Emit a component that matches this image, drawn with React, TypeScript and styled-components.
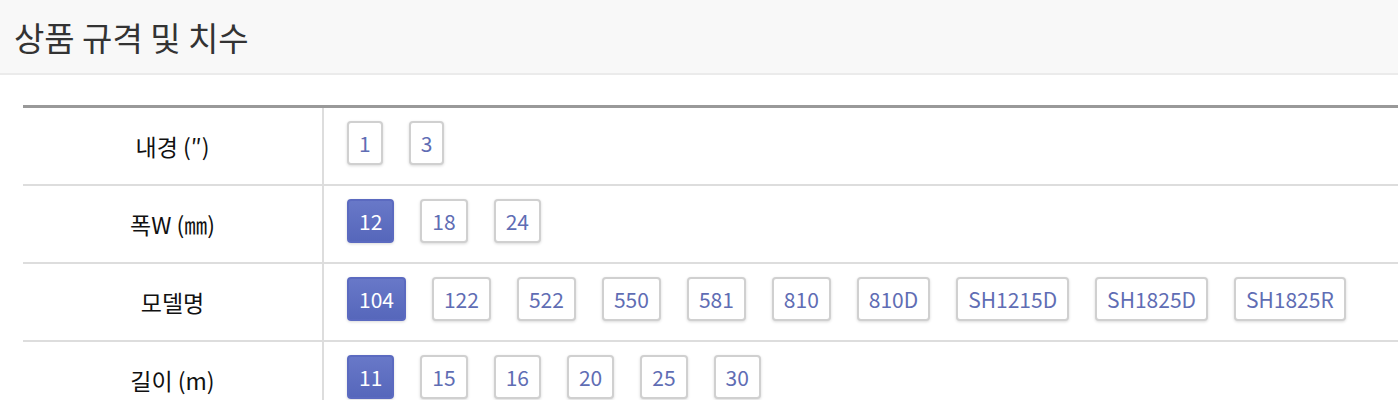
import { FC } from "react";
import styled, { createGlobalStyle } from "styled-components";

const GlobalStyle = createGlobalStyle`
    html, body {
        margin: 0;
        padding: 0;
        background: #fff;
        font-family: "Noto Sans CJK KR", "Noto Sans", sans-serif;
        color: #111;
    }
`;

interface ISpecRow {
    label: string;
    options: string[];
    selected?: string;
}

const specRows: ISpecRow[] = [
    { label: "내경 (″)", options: ["1", "3"] },
    { label: "폭W (㎜)", options: ["12", "18", "24"], selected: "12" },
    {
        label: "모델명",
        options: ["104", "122", "522", "550", "581", "810", "810D", "SH1215D", "SH1825D", "SH1825R"],
        selected: "104",
    },
    { label: "길이 (m)", options: ["11", "15", "16", "20", "25", "30"], selected: "11" },
];

const SectionHeader = styled.header`
    height: 73px;
    background: #f8f8f8;
    border-bottom: 2px solid #ebebeb;
    padding-left: 14px;
    display: flex;
    align-items: center;
`;

const SectionTitle = styled.h2`
    margin: 0;
    font-size: 33px;
    font-weight: 400;
    color: #333;
`;

const SpecTable = styled.div`
    margin: 30px 0 0 23px;
    border-top: 3px solid #999;
`;

const SpecRowBox = styled.div`
    display: grid;
    grid-template-columns: 299px 2px 1fr;
    border-bottom: 2px solid #ddd;
    min-height: 76px;
`;

const SpecLabel = styled.div`
    display: flex;
    align-items: center;
    justify-content: center;
    font-size: 23px;
    color: #111;
`;

const Divider = styled.div`
    background: #ddd;
`;

const OptionList = styled.div`
    display: flex;
    flex-wrap: wrap;
    align-items: flex-start;
    gap: 26px;
    padding: 13px 23px 19px;
`;

const OptionButton = styled.button<{ $active?: boolean }>`
    height: 44px;
    min-width: 34px;
    padding: 0 10px;
    border: 2px solid ${props => (props.$active ? "#5b6ac0" : "#d0d0d0")};
    border-radius: 4px;
    background: ${props => (props.$active ? "linear-gradient(#6878c8, #5667bb)" : "#fff")};
    color: ${props => (props.$active ? "#fff" : "#5f6db4")};
    font-family: "Noto Sans CJK KR", "Noto Sans", sans-serif;
    font-size: 21px;
    line-height: 1;
    box-shadow: 0 1px 3px rgba(0, 0, 0, 0.15);
    cursor: pointer;
`;

const App: FC = () => {
    return (
        <>
            <GlobalStyle />
            <SectionHeader>
                <SectionTitle>상품 규격 및 치수</SectionTitle>
            </SectionHeader>
            <SpecTable>
                {specRows.map(row => (
                    <SpecRowBox key={row.label}>
                        <SpecLabel>{row.label}</SpecLabel>
                        <Divider />
                        <OptionList>
                            {row.options.map(opt => (
                                <OptionButton key={opt} $active={opt === row.selected}>
                                    {opt}
                                </OptionButton>
                            ))}
                        </OptionList>
                    </SpecRowBox>
                ))}
            </SpecTable>
        </>
    );
};

export default App;
